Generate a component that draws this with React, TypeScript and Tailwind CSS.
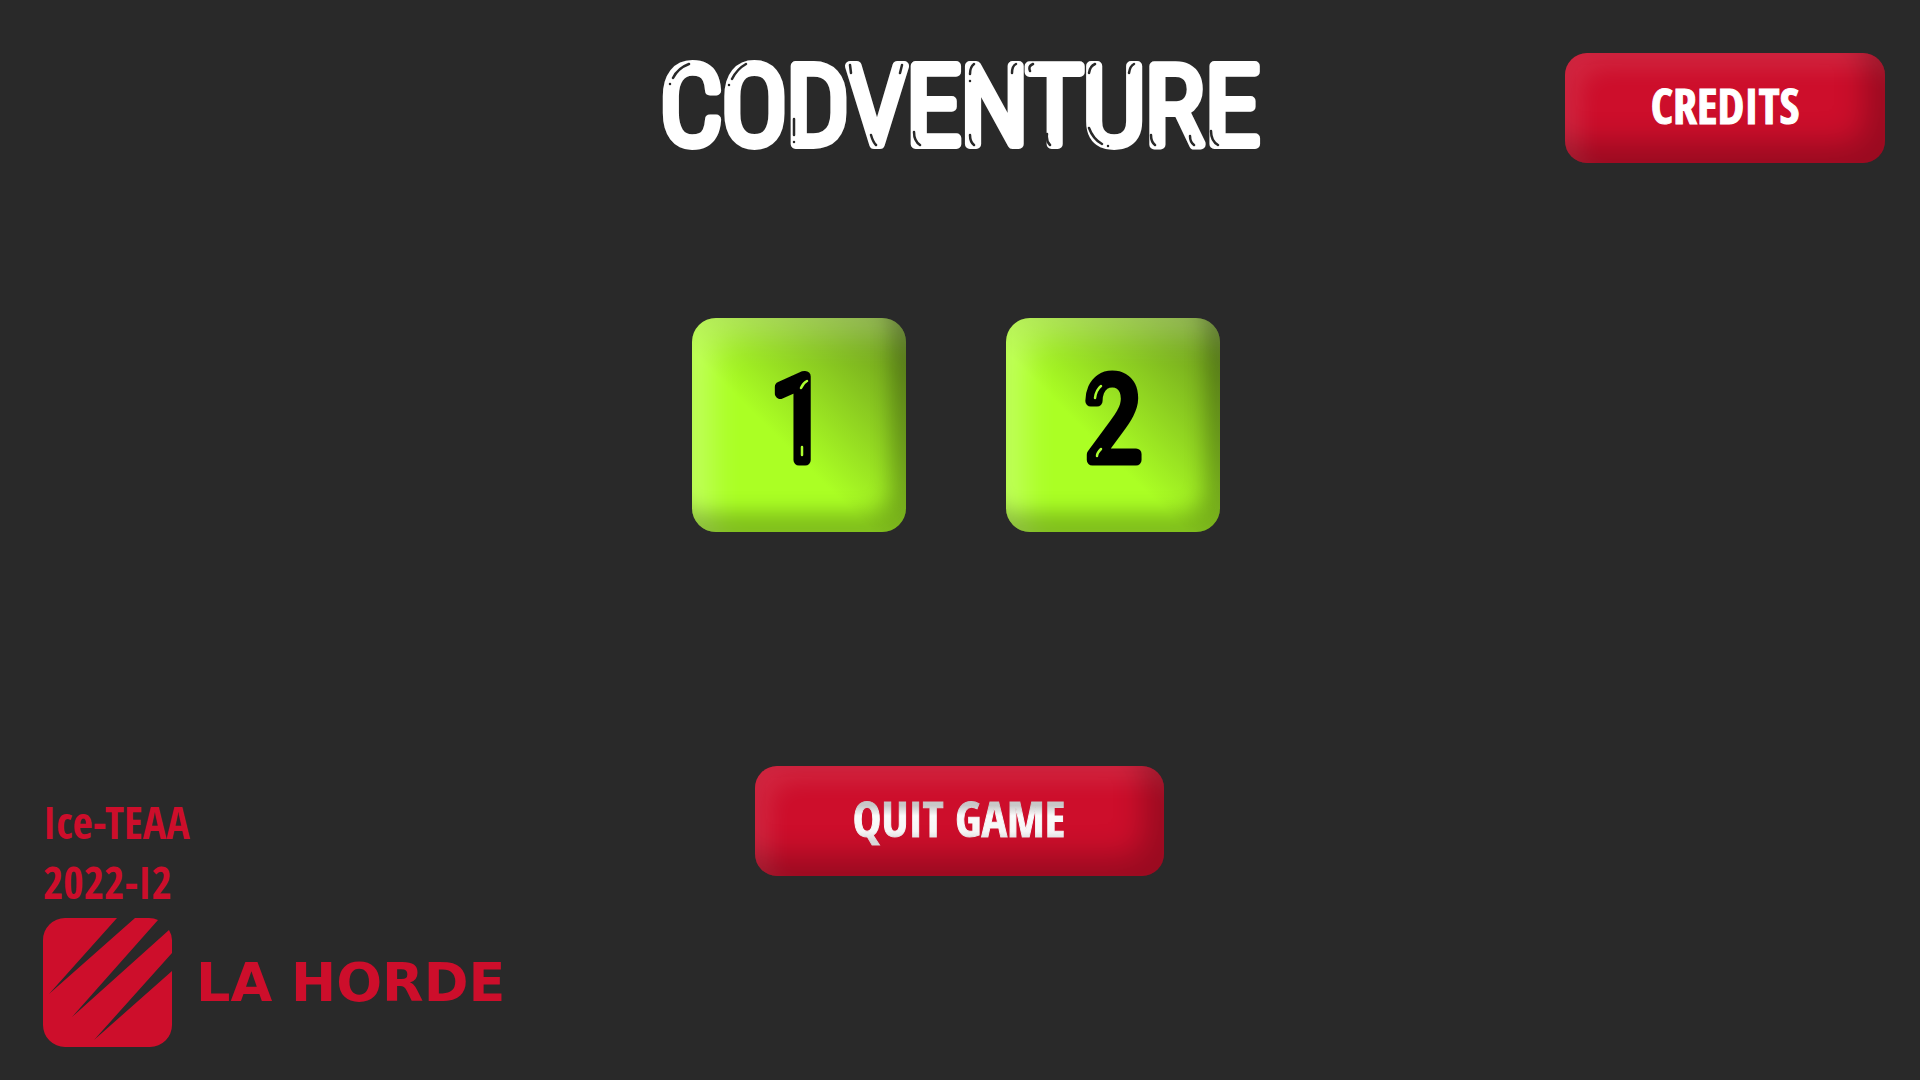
const lettering = 'font-["Open_Sans_Condensed","Open_Sans",sans-serif] font-bold whitespace-nowrap';

const redButton =
  'flex h-[110px] items-center justify-center rounded-[22px] bg-[#cd0e2b] shadow-[inset_-20px_-20px_30px_rgba(0,0,0,0.25),inset_15px_15px_25px_rgba(255,255,255,0.1)]';

const levels = [
  { label: '1', shine: 'M32 18Q34 13 38 11M33 77V85' },
  { label: '2', shine: 'M12 28Q13 20 18 16M14 86Q14 83 18 79' },
];

const titleShine = [
  'M13 25Q18 15 29 11M10 31V31.1',
  'M72 26Q77 16 86 11M69 32V32.1',
  'M134 66V82M134 89V89.1',
  'M190 12L191 20M240 20L242 12M211 82Q213 89 216 92',
  'M254 79Q254 88 260 92',
  'M310 21Q310 14 314 11M310 28V28.1M352 20Q352 13 356 11M310 82Q310 89 314 92',
  'M370 18Q368 13 373 11M387 81Q386 88 390 92',
  'M429 20Q430 13 435 11M469 20Q470 13 474 11M429 75Q433 86 442 91M448 93V93.1',
  'M491 82Q491 89 495 92M530 83Q530 89 534 92',
  'M551 78Q551 88 558 92',
];

function Wordmark() {
  return (
    <svg viewBox="0 0 600 110" className="h-[110px] w-[600px] overflow-visible">
      <text
        x="300"
        y="91"
        textAnchor="middle"
        strokeWidth="10"
        strokeLinejoin="round"
        className="fill-white stroke-white font-['Roboto_Condensed',Roboto,sans-serif] text-[109px] font-light"
      >
        CODVENTURE
      </text>
      <path d={titleShine.join('')} fill="none" stroke="#292929" strokeWidth="2.5" strokeLinecap="round" />
    </svg>
  );
}

function LevelNumber({ label, shine }: { label: string; shine: string }) {
  return (
    <svg viewBox="0 0 60 110" className="h-[110px] w-[60px] overflow-visible">
      <text
        x="30"
        y="90"
        textAnchor="middle"
        strokeWidth="11"
        strokeLinejoin="round"
        className="fill-black stroke-black font-['Roboto_Condensed',Roboto,sans-serif] text-[116px] font-light"
      >
        {label}
      </text>
      <path d={shine} fill="none" stroke="#adff2f" strokeWidth="2.5" strokeLinecap="round" />
    </svg>
  );
}

function HordeMark() {
  return (
    <svg viewBox="0 0 129 129" className="size-[129px] shrink-0" aria-hidden="true">
      <path
        fill="#cd0e2b"
        d="M22 0H74L6 76L92 0H106Q111 0 115 2L29 99L126 12Q129 17 129 22V35L51 122L129 53V107A22 22 0 0 1 107 129H22A22 22 0 0 1 0 107V22A22 22 0 0 1 22 0Z"
      />
    </svg>
  );
}

export default function App() {
  return (
    <main className="flex min-h-screen flex-col bg-[#292929]">
      <header className="grid grid-cols-[1fr_auto_1fr] items-start px-[35px] pt-[53px]">
        <h1 className="col-start-2">
          <Wordmark />
        </h1>
        <button type="button" className={`${redButton} w-80 justify-self-end`}>
          <span className={`${lettering} pb-1 text-[48px] leading-none text-white [-webkit-text-stroke:1px_#fff]`}>CREDITS</span>
        </button>
      </header>

      <nav aria-label="Levels" className="mt-[155px] flex justify-center gap-[100px] pr-2">
        {levels.map((level) => (
          <button
            key={level.label}
            type="button"
            className="flex size-[214px] items-center justify-center rounded-3xl bg-[linear-gradient(45deg,#abff24_42%,#66901c_100%)] shadow-[inset_-15px_-20px_20px_rgba(0,0,0,0.25),inset_20px_20px_30px_rgba(255,255,255,0.25)]"
          >
            <LevelNumber {...level} />
          </button>
        ))}
      </nav>

      <div className="mt-[234px] flex justify-center pr-0.5">
        <button type="button" className={`${redButton} w-[409px]`}>
          <span
            className={`${lettering} bg-[linear-gradient(#c8c8c8_20%,#fafafa_40%,#f6f6f6_70%,#d8d8d8_88%)] bg-clip-text pb-1 text-[48px] leading-none text-transparent [-webkit-text-stroke:1px_transparent]`}
          >
            QUIT GAME
          </span>
        </button>
      </div>

      <footer className="-mt-[84px] self-start pb-[33px] pl-[43px] text-[#cd0e2b]">
        <p className={`${lettering} text-[44px] leading-[60px]`}>Ice-TEAA</p>
        <p className={`${lettering} text-[44px] leading-[60px]`}>2022-I2</p>
        <div className="mt-1.5 flex items-center gap-6">
          <HordeMark />
          <p className="font-['DejaVu_Sans',sans-serif] text-[54px] leading-none font-bold whitespace-nowrap">LA HORDE</p>
        </div>
      </footer>
    </main>
  );
}
